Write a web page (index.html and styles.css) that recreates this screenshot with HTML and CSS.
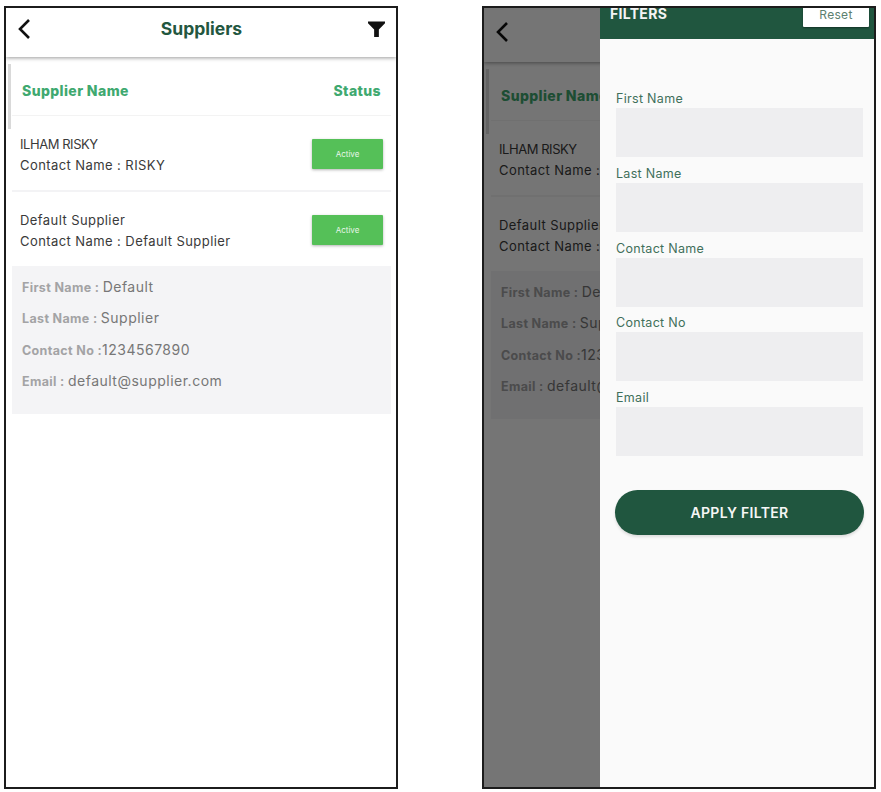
FILE: index.html
```html
<!DOCTYPE html>
<html lang="en">
<head>
    <meta charset="UTF-8">
    <meta name="viewport" content="width=device-width, initial-scale=1.0">
    <title>Suppliers</title>
    <link rel="stylesheet" href="styles.css">
</head>
<body>
  <!-- list screen -->
  <div class="phone">
    <div class="topbar">
      <svg class="back-icon" viewBox="0 0 14 22"><path d="M12 2 L3 11 L12 20" /></svg>
      <h1>Suppliers</h1>
      <svg class="filter-icon" viewBox="0 0 18 18"><path d="M0 1 H18 V3 L11.5 9.5 V17.5 H6.5 V9.5 L0 3 Z" /></svg>
    </div>
    <div class="list">
      <div class="thumb"></div>
      <div class="list-head"><span>Supplier Name</span><span>Status</span></div>
      <div class="row row-first">
        <div class="row-text"><p class="caps">ILHAM RISKY</p><p>Contact Name : RISKY</p></div>
        <div class="status">Active</div>
      </div>
      <div class="row">
        <div class="row-text"><p>Default Supplier</p><p>Contact Name : Default Supplier</p></div>
        <div class="status">Active</div>
      </div>
      <div class="details">
        <p><b>First Name : </b>Default</p>
        <p><b>Last Name : </b>Supplier</p>
        <p><b>Contact No :</b>1234567890</p>
        <p><b>Email : </b>default@supplier.com</p>
      </div>
    </div>
  </div>

  <!-- same screen with the filter drawer open -->
  <div class="phone phone-filter">
    <div class="topbar">
      <svg class="back-icon" viewBox="0 0 14 22"><path d="M12 2 L3 11 L12 20" /></svg>
    </div>
    <div class="list">
      <div class="thumb"></div>
      <div class="list-head"><span>Supplier Name</span></div>
      <div class="row row-first">
        <div class="row-text"><p class="caps">ILHAM RISKY</p><p>Contact Name : RISKY</p></div>
      </div>
      <div class="row">
        <div class="row-text"><p>Default Supplier</p><p>Contact Name : Default Supplier</p></div>
      </div>
      <div class="details">
        <p><b>First Name : </b>Default</p>
        <p><b>Last Name : </b>Supplier</p>
        <p><b>Contact No :</b>1234567890</p>
        <p><b>Email : </b>default@supplier.com</p>
      </div>
    </div>

    <div class="dim"></div>

    <div class="drawer">
      <div class="drawer-head">
        <span class="drawer-title">FILTERS</span>
        <button class="reset" type="button">Reset</button>
      </div>
      <form class="filter-form">
        <label>First Name<input type="text"></label>
        <label>Last Name<input type="text"></label>
        <label>Contact Name<input type="text"></label>
        <label>Contact No<input type="text"></label>
        <label>Email<input type="text"></label>
        <button class="apply" type="button">APPLY FILTER</button>
      </form>
    </div>
  </div>
</body>
</html>
```

FILE: styles.css
```css
* {
  box-sizing: border-box;
}

body {
  margin: 0;
  padding: 6px 0 0 4px;
  display: flex;
  gap: 84px;
  background-color: #fff;
  font-family: "Inter", "Liberation Sans", sans-serif;
  color: #3a3a3a;
}

p {
  margin: 0;
}

.phone {
  position: relative;
  width: 394px;
  height: 783px;
  border: 2px solid #1c1c1c;
  background-color: #fff;
  overflow: hidden;
}

.topbar {
  height: 49px;
  padding: 0 11px 8px 11px;
  display: flex;
  align-items: center;
  justify-content: space-between;
  box-shadow: 0 1px 4px rgba(0, 0, 0, 0.4);
}

.topbar h1 {
  margin: 0 0 0 4px;
  font-size: 17.5px;
  font-weight: 700;
  color: #23573f;
}

.back-icon {
  width: 14px;
  height: 22px;
  fill: none;
  stroke: #111;
  stroke-width: 2.6;
}

.filter-icon {
  width: 17px;
  height: 18px;
  fill: #111;
}

.list {
  position: relative;
  padding: 8px 5px 0 6px;
}

.thumb {
  position: absolute;
  left: 2px;
  top: 7px;
  width: 3px;
  height: 65px;
  background-color: #d9d9d9;
}

.list-head {
  height: 51px;
  padding: 0 10px 0 10px;
  display: flex;
  align-items: center;
  justify-content: space-between;
  border-bottom: 1px solid #f3f3f3;
  font-size: 14px;
  font-weight: 800;
  letter-spacing: 0.4px;
  color: #3fa970;
}

.row {
  height: 74px;
  padding: 2px 8px 0 8px;
  display: flex;
  align-items: center;
  justify-content: space-between;
}

.row-first {
  height: 76px;
  padding-top: 2px;
  border-bottom: 2px solid #f3f3f5;
}

.row-text {
  margin-top: 2px;
  font-size: 13px;
  line-height: 21px;
  letter-spacing: 0.42px;
}

.row-text .caps {
  letter-spacing: -0.45px;
}

.status {
  width: 71px;
  height: 30px;
  display: flex;
  align-items: center;
  justify-content: center;
  border-radius: 1px;
  background-color: #55c058;
  box-shadow: 0 1px 3px rgba(0, 0, 0, 0.3);
  color: #e8f6e8;
  font-size: 8px;
}

.details {
  height: 148px;
  padding: 11px 10px 0;
  background-color: #f4f4f6;
  color: #777;
  font-size: 14px;
  line-height: 20px;
  letter-spacing: 0.5px;
}

.details p {
  margin-bottom: 10.4px;
}

.details b {
  font-size: 12.5px;
  letter-spacing: 0.35px;
  color: #a3a3a5;
}

.phone-filter .topbar {
  height: 54px;
  padding-bottom: 7px;
}

.phone-filter .list {
  padding-left: 7px;
}

.dim {
  position: absolute;
  inset: 0;
  background-color: rgba(0, 0, 0, 0.54);
}

.drawer {
  position: absolute;
  top: 0;
  right: 0;
  bottom: 0;
  width: 274px;
  background-color: #fafafa;
}

.drawer-head {
  height: 31px;
  padding: 0 5px 0 10px;
  display: flex;
  align-items: flex-start;
  justify-content: space-between;
  background-color: #20563f;
}

.drawer-title {
  margin-top: -3px;
  color: #f4f4f4;
  font-size: 14px;
  font-weight: 700;
  letter-spacing: 0.3px;
}

.reset {
  width: 66px;
  height: 20px;
  margin-top: -1px;
  padding: 0 0 9px;
  border: none;
  border-radius: 1px;
  background-color: #fff;
  box-shadow: 0 1px 2px rgba(0, 0, 0, 0.4);
  color: #5d7f6f;
  font-family: inherit;
  font-size: 12px;
  letter-spacing: 0.3px;
}

.filter-form {
  padding: 51.4px 11px 0 16px;
  display: flex;
  flex-direction: column;
  gap: 7.7px;
}

.filter-form label {
  display: block;
  color: #3f6f5a;
  font-size: 12.5px;
  line-height: 18px;
  letter-spacing: 0.3px;
}

.filter-form input {
  display: block;
  width: 100%;
  height: 49px;
  border: none;
  background-color: #eeeef0;
}

.apply {
  margin: 26.2px 0 0 -1px;
  width: 249px;
  height: 45px;
  border: none;
  border-radius: 23px;
  background-color: #20563f;
  box-shadow: 0 2px 3px rgba(0, 0, 0, 0.12);
  color: #f6f6f6;
  font-family: inherit;
  font-size: 14px;
  font-weight: 600;
  letter-spacing: 0.3px;
}
```
